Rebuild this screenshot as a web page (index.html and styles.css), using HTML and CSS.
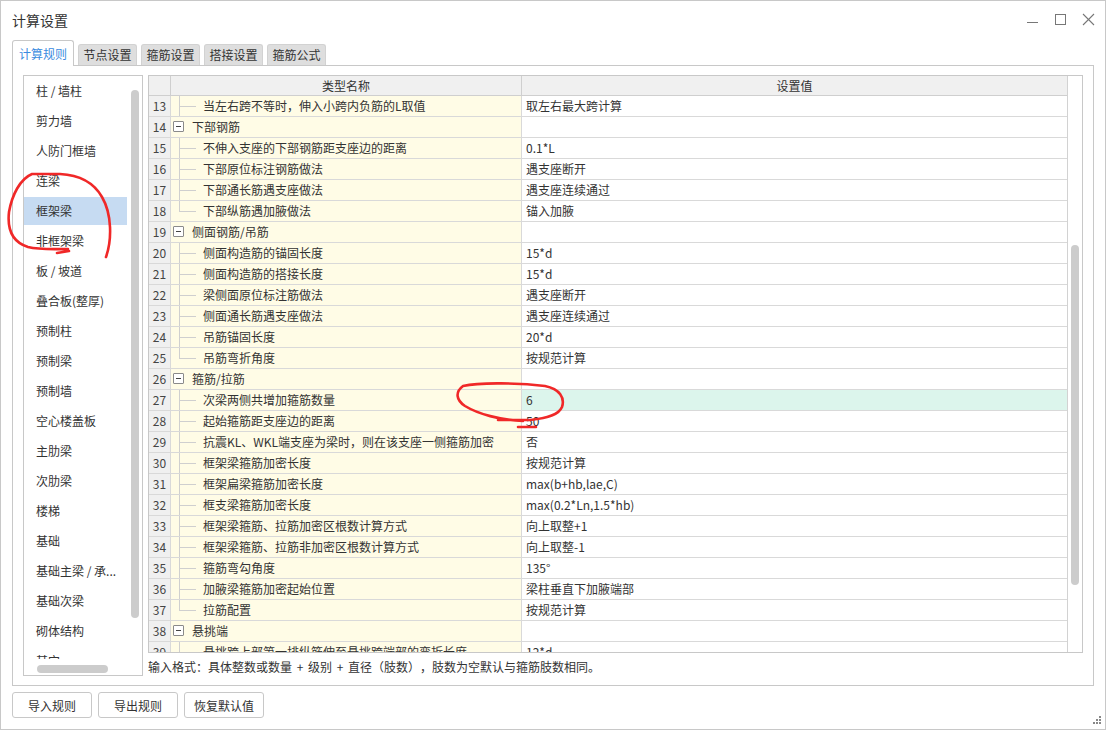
FILE: index.html
```html
<!DOCTYPE html>
<html lang="zh-CN">
<head>
<meta charset="utf-8">
<title>计算设置</title>
<link rel="stylesheet" href="styles.css">
</head>
<body>
<div class="window">
  <div class="titlebar">
    <span class="title">计算设置</span>
    <svg class="controls" width="80" height="38" viewBox="0 0 80 38">
      <line x1="6" y1="21.5" x2="17" y2="21.5" stroke="#777" stroke-width="1"/>
      <rect x="34.5" y="13.5" width="10" height="10" fill="none" stroke="#777" stroke-width="1"/>
      <line x1="62" y1="13" x2="73" y2="24" stroke="#777" stroke-width="1.1"/>
      <line x1="73" y1="13" x2="62" y2="24" stroke="#777" stroke-width="1.1"/>
    </svg>
  </div>

  <div class="tabs">
    <div class="tab active">计算规则</div>
    <div class="tab">节点设置</div>
    <div class="tab">箍筋设置</div>
    <div class="tab">搭接设置</div>
    <div class="tab">箍筋公式</div>
  </div>

  <div class="panel">
    <div class="sidebar">
      <ul class="cat-list">
        <li>柱 / 墙柱</li>
        <li>剪力墙</li>
        <li>人防门框墙</li>
        <li>连梁</li>
        <li class="selected">框架梁</li>
        <li>非框架梁</li>
        <li>板 / 坡道</li>
        <li>叠合板(整厚)</li>
        <li>预制柱</li>
        <li>预制梁</li>
        <li>预制墙</li>
        <li>空心楼盖板</li>
        <li>主肋梁</li>
        <li>次肋梁</li>
        <li>楼梯</li>
        <li>基础</li>
        <li>基础主梁 / 承...</li>
        <li>基础次梁</li>
        <li>砌体结构</li>
        <li>其它</li>
      </ul>
      <div class="vscroll"><div class="vthumb"></div></div>
      <div class="hscroll"><div class="hthumb"></div></div>
    </div>

    <div class="main">
      <div class="table">
        <div class="grid">
          <div class="row head">
            <div class="c-num"></div>
            <div class="c-name">类型名称</div>
            <div class="c-val">设置值</div>
          </div>
          <div class="row"><div class="c-num">13</div><div class="c-name"><span class="tree"></span>当左右跨不等时，伸入小跨内负筋的L取值</div><div class="c-val">取左右最大跨计算</div></div>
          <div class="row"><div class="c-num">14</div><div class="c-name group"><span class="box"></span>下部钢筋</div><div class="c-val"></div></div>
          <div class="row"><div class="c-num">15</div><div class="c-name"><span class="tree"></span>不伸入支座的下部钢筋距支座边的距离</div><div class="c-val">0.1*L</div></div>
          <div class="row"><div class="c-num">16</div><div class="c-name"><span class="tree"></span>下部原位标注钢筋做法</div><div class="c-val">遇支座断开</div></div>
          <div class="row"><div class="c-num">17</div><div class="c-name"><span class="tree"></span>下部通长筋遇支座做法</div><div class="c-val">遇支座连续通过</div></div>
          <div class="row"><div class="c-num">18</div><div class="c-name"><span class="tree last"></span>下部纵筋遇加腋做法</div><div class="c-val">锚入加腋</div></div>
          <div class="row"><div class="c-num">19</div><div class="c-name group"><span class="box"></span>侧面钢筋/吊筋</div><div class="c-val"></div></div>
          <div class="row"><div class="c-num">20</div><div class="c-name"><span class="tree"></span>侧面构造筋的锚固长度</div><div class="c-val">15*d</div></div>
          <div class="row"><div class="c-num">21</div><div class="c-name"><span class="tree"></span>侧面构造筋的搭接长度</div><div class="c-val">15*d</div></div>
          <div class="row"><div class="c-num">22</div><div class="c-name"><span class="tree"></span>梁侧面原位标注筋做法</div><div class="c-val">遇支座断开</div></div>
          <div class="row"><div class="c-num">23</div><div class="c-name"><span class="tree"></span>侧面通长筋遇支座做法</div><div class="c-val">遇支座连续通过</div></div>
          <div class="row"><div class="c-num">24</div><div class="c-name"><span class="tree"></span>吊筋锚固长度</div><div class="c-val">20*d</div></div>
          <div class="row"><div class="c-num">25</div><div class="c-name"><span class="tree last"></span>吊筋弯折角度</div><div class="c-val">按规范计算</div></div>
          <div class="row"><div class="c-num">26</div><div class="c-name group"><span class="box"></span>箍筋/拉筋</div><div class="c-val"></div></div>
          <div class="row"><div class="c-num">27</div><div class="c-name"><span class="tree"></span>次梁两侧共增加箍筋数量</div><div class="c-val active">6</div></div>
          <div class="row"><div class="c-num">28</div><div class="c-name"><span class="tree"></span>起始箍筋距支座边的距离</div><div class="c-val">50</div></div>
          <div class="row"><div class="c-num">29</div><div class="c-name"><span class="tree"></span>抗震KL、WKL端支座为梁时，则在该支座一侧箍筋加密</div><div class="c-val">否</div></div>
          <div class="row"><div class="c-num">30</div><div class="c-name"><span class="tree"></span>框架梁箍筋加密长度</div><div class="c-val">按规范计算</div></div>
          <div class="row"><div class="c-num">31</div><div class="c-name"><span class="tree"></span>框架扁梁箍筋加密长度</div><div class="c-val">max(b+hb,lae,C)</div></div>
          <div class="row"><div class="c-num">32</div><div class="c-name"><span class="tree"></span>框支梁箍筋加密长度</div><div class="c-val">max(0.2*Ln,1.5*hb)</div></div>
          <div class="row"><div class="c-num">33</div><div class="c-name"><span class="tree"></span>框架梁箍筋、拉筋加密区根数计算方式</div><div class="c-val">向上取整+1</div></div>
          <div class="row"><div class="c-num">34</div><div class="c-name"><span class="tree"></span>框架梁箍筋、拉筋非加密区根数计算方式</div><div class="c-val">向上取整-1</div></div>
          <div class="row"><div class="c-num">35</div><div class="c-name"><span class="tree"></span>箍筋弯勾角度</div><div class="c-val">135°</div></div>
          <div class="row"><div class="c-num">36</div><div class="c-name"><span class="tree"></span>加腋梁箍筋加密起始位置</div><div class="c-val">梁柱垂直下加腋端部</div></div>
          <div class="row"><div class="c-num">37</div><div class="c-name"><span class="tree last"></span>拉筋配置</div><div class="c-val">按规范计算</div></div>
          <div class="row"><div class="c-num">38</div><div class="c-name group"><span class="box"></span>悬挑端</div><div class="c-val"></div></div>
          <div class="row"><div class="c-num">39</div><div class="c-name"><span class="tree"></span>悬挑跨上部第一排纵筋伸至悬挑跨端部的弯折长度</div><div class="c-val">12*d</div></div>
        </div>
        <div class="tscroll"><div class="tthumb"></div></div>
      </div>
      <div class="note">输入格式：具体整数或数量 + 级别 + 直径（肢数），肢数为空默认与箍筋肢数相同。</div>
    </div>
  </div>

  <div class="buttons">
    <button class="btn">导入规则</button>
    <button class="btn">导出规则</button>
    <button class="btn">恢复默认值</button>
  </div>

  <svg class="grip" width="10" height="10" viewBox="0 0 10 10">
    <rect x="7" y="1" width="2" height="2" fill="#888"/>
    <rect x="4" y="4" width="2" height="2" fill="#888"/>
    <rect x="7" y="4" width="2" height="2" fill="#888"/>
    <rect x="1" y="7" width="2" height="2" fill="#888"/>
    <rect x="4" y="7" width="2" height="2" fill="#888"/>
    <rect x="7" y="7" width="2" height="2" fill="#888"/>
  </svg>

  <svg class="ink" width="1106" height="730" viewBox="0 0 1106 730">
    <path d="M106,257 C112,240 112,214 102,197 C94,183 80,175 60,174 L32,174 C20,179 12,195 9,212 C7,230 12,242 28,247 C40,250 55,249 68,249 M57,253 L69,251"
          fill="none" stroke="#f02828" stroke-width="2.6" stroke-linecap="round" stroke-linejoin="round"/>
    <path d="M463,386 C480,382 520,383 545,386 C560,389 565,398 562,407 C559,414 550,418 530,420 L498,420 M523,421 C500,420 478,414 465,406 C456,400 455,392 463,386 M518,427 L536,427"
          fill="none" stroke="#f02828" stroke-width="2.6" stroke-linecap="round" stroke-linejoin="round"/>
  </svg>
</div>
</body>
</html>
```

FILE: styles.css
```css
* { box-sizing: border-box; }

html, body {
  margin: 0;
  padding: 0;
  background: #ffffff;
}

body {
  font-family: "Noto Sans CJK SC", "Noto Sans", sans-serif;
  font-size: 12px;
  color: #333333;
  text-spacing-trim: space-all;
}

.window {
  position: relative;
  width: 1106px;
  height: 730px;
  border: 1px solid #c8c8c8;
  background: #ffffff;
  display: flex;
  flex-direction: column;
}

.titlebar {
  height: 39px;
  display: flex;
  align-items: flex-start;
  padding-left: 11px;
  padding-right: 4px;
}

.title {
  font-size: 14px;
  line-height: 39px;
  color: #333333;
}

.controls {
  margin-left: auto;
  display: block;
}

.tabs {
  height: 25px;
  display: flex;
  align-items: flex-end;
  gap: 4px;
  margin-left: 11px;
  position: relative;
  z-index: 1;
}

.tab {
  height: 21px;
  width: 59px;
  line-height: 20px;
  text-align: center;
  background: #dedede;
  border: 1px solid #d2d2d2;
  border-bottom: none;
  border-radius: 3px 3px 0 0;
  color: #333333;
}

.tab.active {
  height: 26px;
  width: 62px;
  line-height: 25px;
  background: #ffffff;
  border-color: #c8c8c8;
  color: #3a8be0;
  margin-bottom: -1px;
}

.panel {
  height: 621px;
  margin: 0 11px;
  border: 1px solid #c8c8c8;
  padding: 9px 10px 0 10px;
  display: flex;
  gap: 5px;
}

/* Sidebar */
.sidebar {
  width: 120px;
  height: 601px;
  border: 1px solid #c8c8c8;
  display: grid;
  grid-template-columns: 1fr 15px;
  grid-template-rows: 1fr 16px;
  overflow: hidden;
}

.cat-list {
  list-style: none;
  margin: 0;
  padding: 0;
  overflow: hidden;
  grid-column: 1;
  grid-row: 1;
  display: flex;
  flex-direction: column;
}

.cat-list li {
  flex: none;
  height: 28px;
  margin: 1px 0;
  line-height: 28px;
  padding-left: 12px;
  white-space: nowrap;
  color: #333333;
}

.cat-list li.selected {
  background: #c6dbf2;
}

.vscroll {
  grid-column: 2;
  grid-row: 1 / span 2;
  padding-top: 14px;
  display: flex;
  justify-content: center;
  align-items: flex-start;
  padding-left: 1px;
}

.vthumb {
  width: 8px;
  height: 528px;
  background: #cccccc;
  border-radius: 4px;
}

.hscroll {
  grid-column: 1;
  grid-row: 2;
  padding: 6px 0 0 13px;
  background: #ffffff;
}

.hthumb {
  width: 71px;
  height: 8px;
  background: #cccccc;
  border-radius: 4px;
}

/* Main table */
.main {
  flex: 1;
  display: flex;
  flex-direction: column;
}

.table {
  height: 578px;
  border: 1px solid #c8c8c8;
  display: flex;
  overflow: hidden;
}

.grid {
  flex: 1;
  overflow: hidden;
}

.row {
  display: grid;
  grid-template-columns: 22px 351px 1fr;
  height: 21px;
}

.row > div {
  border-bottom: 1px solid #d9d9d9;
  line-height: 20px;
  white-space: nowrap;
  overflow: hidden;
}

.c-num {
  background: #f0f0f0;
  border-right: 1px solid #d9d9d9;
  text-align: center;
  color: #444444;
}

.c-name {
  background: #fffce6;
  border-right: 1px solid #d9d9d9;
  display: flex;
  align-items: flex-start;
}

.c-val {
  background: #ffffff;
  padding-left: 4px;
}

.c-val.active {
  background: #dcf5ec;
}

.row.head {
  height: 20px;
}

.row.head > div {
  background: #f0f0f0;
  border-bottom: 1px solid #cfcfcf;
  line-height: 19px;
  text-align: center;
  justify-content: center;
  padding-left: 0;
}

.row.head .c-num,
.row.head .c-name {
  border-right: 1px solid #cfcfcf;
}

.tree {
  flex: none;
  width: 32px;
  height: 20px;
  background:
    linear-gradient(#cfcfcf, #cfcfcf) 8px 0 / 1px 20px no-repeat,
    linear-gradient(#cfcfcf, #cfcfcf) 8px 10px / 17px 1px no-repeat;
}

.tree.last {
  background:
    linear-gradient(#cfcfcf, #cfcfcf) 8px 0 / 1px 11px no-repeat,
    linear-gradient(#cfcfcf, #cfcfcf) 8px 10px / 17px 1px no-repeat;
}

.box {
  flex: none;
  width: 11px;
  height: 11px;
  margin: 4px 8px 0 2px;
  border: 1px solid #8a8a8a;
  border-radius: 1px;
  background: linear-gradient(#444, #444) center / 5px 1px no-repeat #ffffff;
}

.tscroll {
  width: 15px;
  border-left: 1px solid #d2d2d2;
  background: #ffffff;
  padding-top: 169px;
  display: flex;
  justify-content: center;
  align-items: flex-start;
}

.tthumb {
  width: 8px;
  height: 340px;
  background: #cccccc;
  border-radius: 4px;
}

.note {
  margin-top: 4px;
  line-height: 20px;
  color: #333333;
  white-space: nowrap;
  word-spacing: 2px;
}

/* Buttons */
.buttons {
  display: flex;
  gap: 6px;
  margin: 6px 0 0 11px;
}

.btn {
  width: 80px;
  height: 26px;
  border: 1px solid #c8c8c8;
  border-radius: 3px;
  background: #ffffff;
  font-family: "Noto Sans CJK SC", "Noto Sans", sans-serif;
  font-size: 12px;
  color: #333333;
  padding: 0;
}

.grip {
  position: absolute;
  right: 3px;
  bottom: 4px;
}

.ink {
  position: absolute;
  left: -1px;
  top: -1px;
  pointer-events: none;
}
```
